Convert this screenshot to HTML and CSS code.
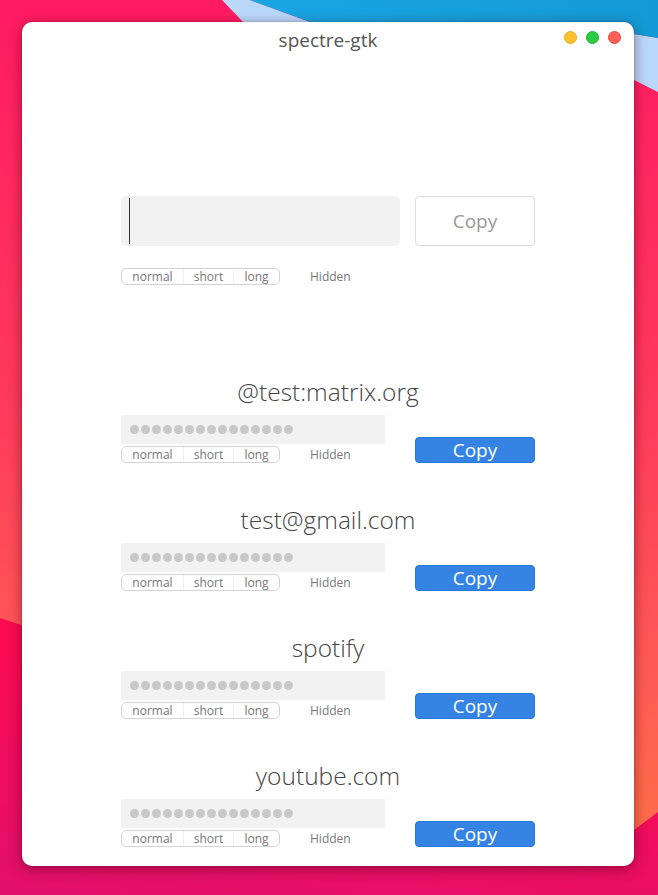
FILE: index.html
```html
<!DOCTYPE html>
<html>
<head>
<meta charset="utf-8">
<link rel="stylesheet" href="styles.css">
</head>
<body>
<svg class="wallpaper" width="658" height="895" viewBox="0 0 658 895">
  <defs>
    <linearGradient id="gPink" x1="0" y1="0" x2="0" y2="1">
      <stop offset="0" stop-color="#ff1a62"/>
      <stop offset="0.45" stop-color="#ff3a5c"/>
      <stop offset="0.75" stop-color="#ff5a55"/>
      <stop offset="0.9" stop-color="#ff6a4a"/>
    </linearGradient>
    <linearGradient id="gRed" x1="0.3" y1="0" x2="0" y2="1">
      <stop offset="0" stop-color="#ff0a4c"/>
      <stop offset="1" stop-color="#e2106c"/>
    </linearGradient>
    <linearGradient id="gBlue" x1="0" y1="0" x2="1" y2="0">
      <stop offset="0" stop-color="#18a6e2"/>
      <stop offset="1" stop-color="#139ad6"/>
    </linearGradient>
  </defs>
  <rect width="658" height="895" fill="url(#gPink)"/>
  <polygon points="0,618 30,628 634,830 658,812 658,895 0,895" fill="url(#gRed)"/>
  <polygon points="222,0 250,0 310,22 634,34 658,38 658,92 634,80 243,22" fill="#bad8fa"/>
  <polygon points="250,0 658,0 658,38 634,34 310,22" fill="url(#gBlue)"/>
</svg>

<div class="window">
  <div class="titlebar">
    <span class="title">spectre-gtk</span>
    <div class="lights">
      <span class="light yellow"></span>
      <span class="light green"></span>
      <span class="light red"></span>
    </div>
  </div>

  <div class="content">
    <div class="top-row">
      <div class="entry"><span class="caret"></span></div>
      <button class="btn btn-plain">Copy</button>
    </div>
    <div class="options">
      <div class="seg">
        <span class="seg-item s-normal">normal</span>
        <span class="seg-item s-short">short</span>
        <span class="seg-item s-long">long</span>
      </div>
      <span class="hidden-label">Hidden</span>
    </div>

    <div class="sites">
      <div class="site">
        <div class="site-name">@test:matrix.org</div>
        <div class="site-row">
          <div class="site-left">
            <div class="pw"><span class="d"></span><span class="d"></span><span class="d"></span><span class="d"></span><span class="d"></span><span class="d"></span><span class="d"></span><span class="d"></span><span class="d"></span><span class="d"></span><span class="d"></span><span class="d"></span><span class="d"></span><span class="d"></span><span class="d"></span></div>
            <div class="options small">
              <div class="seg">
                <span class="seg-item s-normal">normal</span>
                <span class="seg-item s-short">short</span>
                <span class="seg-item s-long">long</span>
              </div>
              <span class="hidden-label">Hidden</span>
            </div>
          </div>
          <button class="btn btn-blue">Copy</button>
        </div>
      </div>

      <div class="site">
        <div class="site-name">test@gmail.com</div>
        <div class="site-row">
          <div class="site-left">
            <div class="pw"><span class="d"></span><span class="d"></span><span class="d"></span><span class="d"></span><span class="d"></span><span class="d"></span><span class="d"></span><span class="d"></span><span class="d"></span><span class="d"></span><span class="d"></span><span class="d"></span><span class="d"></span><span class="d"></span><span class="d"></span></div>
            <div class="options small">
              <div class="seg">
                <span class="seg-item s-normal">normal</span>
                <span class="seg-item s-short">short</span>
                <span class="seg-item s-long">long</span>
              </div>
              <span class="hidden-label">Hidden</span>
            </div>
          </div>
          <button class="btn btn-blue">Copy</button>
        </div>
      </div>

      <div class="site">
        <div class="site-name">spotify</div>
        <div class="site-row">
          <div class="site-left">
            <div class="pw"><span class="d"></span><span class="d"></span><span class="d"></span><span class="d"></span><span class="d"></span><span class="d"></span><span class="d"></span><span class="d"></span><span class="d"></span><span class="d"></span><span class="d"></span><span class="d"></span><span class="d"></span><span class="d"></span><span class="d"></span></div>
            <div class="options small">
              <div class="seg">
                <span class="seg-item s-normal">normal</span>
                <span class="seg-item s-short">short</span>
                <span class="seg-item s-long">long</span>
              </div>
              <span class="hidden-label">Hidden</span>
            </div>
          </div>
          <button class="btn btn-blue">Copy</button>
        </div>
      </div>

      <div class="site">
        <div class="site-name">youtube.com</div>
        <div class="site-row">
          <div class="site-left">
            <div class="pw"><span class="d"></span><span class="d"></span><span class="d"></span><span class="d"></span><span class="d"></span><span class="d"></span><span class="d"></span><span class="d"></span><span class="d"></span><span class="d"></span><span class="d"></span><span class="d"></span><span class="d"></span><span class="d"></span><span class="d"></span></div>
            <div class="options small">
              <div class="seg">
                <span class="seg-item s-normal">normal</span>
                <span class="seg-item s-short">short</span>
                <span class="seg-item s-long">long</span>
              </div>
              <span class="hidden-label">Hidden</span>
            </div>
          </div>
          <button class="btn btn-blue">Copy</button>
        </div>
      </div>
    </div>
  </div>
</div>
</body>
</html>
```

FILE: styles.css
```css
* { box-sizing: border-box; }
html, body {
  margin: 0;
  padding: 0;
  width: 658px;
  height: 895px;
  overflow: hidden;
}
body {
  position: relative;
  font-family: "Open Sans", "Noto Sans", sans-serif;
  padding: 22px 24px 0 22px;
}
.wallpaper {
  position: absolute;
  left: 0;
  top: 0;
  z-index: 0;
}
.window {
  position: relative;
  z-index: 1;
  width: 612px;
  height: 844px;
  background: #fff;
  border-radius: 10px;
  box-shadow: 0 3px 14px rgba(60, 0, 20, 0.45), 0 0 2px rgba(0,0,0,0.25);
  display: flex;
  flex-direction: column;
}
.titlebar {
  position: relative;
  height: 36px;
  display: flex;
  align-items: center;
  justify-content: center;
}
.title {
  font-size: 19px;
  color: #555;
  margin-top: -1px;
}
.lights {
  position: absolute;
  right: 13px;
  top: 9px;
  display: flex;
  gap: 9px;
}
.light {
  width: 13px;
  height: 13px;
  border-radius: 50%;
}
.yellow { background: #fdc12d; border: 1px solid #e6aa1f; }
.green { background: #29cb42; border: 1px solid #1fb334; }
.red { background: #fe5f57; border: 1px solid #e8473f; }

.content {
  width: 414px;
  margin: 138px auto 0;
  display: flex;
  flex-direction: column;
}
.top-row {
  display: flex;
  gap: 15px;
  height: 50px;
}
.entry {
  width: 279px;
  height: 50px;
  background: #f2f2f2;
  border-radius: 5px;
  padding: 2px 0 0 8px;
}
.caret {
  display: block;
  width: 1px;
  height: 46px;
  background: #333;
}
.btn {
  font-family: "Open Sans", "Noto Sans", sans-serif;
  font-size: 19px;
  border-radius: 4px;
  width: 120px;
  padding: 0;
  cursor: default;
}
.btn-plain {
  height: 50px;
  background: #fff;
  border: 1px solid #dcdcdc;
  color: #999;
}
.btn-blue {
  height: 26px;
  background: #3584e4;
  border: 1px solid #2a76d6;
  color: #fff;
  line-height: 22px;
  align-self: flex-end;
}
.options {
  display: flex;
  align-items: center;
  margin-top: 22px;
  height: 17px;
}
.options.small { margin-top: 2px; }
.seg {
  display: flex;
  height: 17px;
  width: 159px;
  border: 1px solid #d4d4d4;
  border-radius: 5px;
  font-size: 12px;
  color: #777;
}
.seg-item {
  display: flex;
  align-items: center;
  justify-content: center;
  line-height: 15px;
}
.s-normal { width: 62px; border-right: 1px solid #f0f0f0; }
.s-short { width: 50px; border-right: 1px solid #f0f0f0; }
.s-long { flex: 1; }
.hidden-label {
  font-size: 12px;
  color: #777;
  margin-left: 30px;
  line-height: 15px;
}
.sites {
  margin-top: 92px;
  display: flex;
  flex-direction: column;
  gap: 42px;
}
.site-name {
  height: 30px;
  text-align: center;
  font-size: 24.5px;
  font-weight: 300;
  color: #444;
  line-height: 30px;
  margin-bottom: 8px;
}
.site-row {
  display: flex;
  justify-content: space-between;
  height: 48px;
}
.site-left {
  width: 264px;
  display: flex;
  flex-direction: column;
}
.pw {
  height: 29px;
  background: #f2f2f2;
  display: flex;
  align-items: center;
  gap: 2px;
  padding-left: 9px;
}
.d {
  width: 9px;
  height: 9px;
  border-radius: 50%;
  background: #c8c8c8;
}
```
